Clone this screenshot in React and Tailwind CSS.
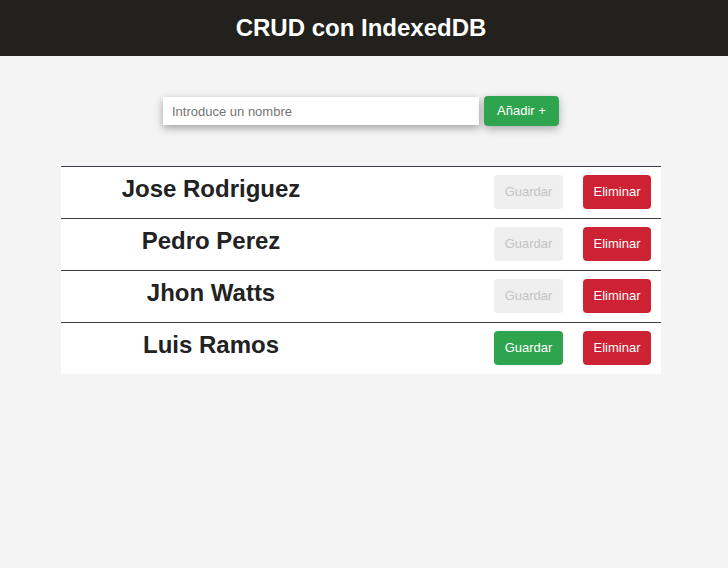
import React from "react";

const people = [
  { name: "Jose Rodriguez", dirty: false },
  { name: "Pedro Perez", dirty: false },
  { name: "Jhon Watts", dirty: false },
  { name: "Luis Ramos", dirty: true },
];

export default function App() {
  return (
    <div className="min-h-[568px] bg-[#f4f4f4] font-['Liberation_Sans',Arial,sans-serif]">
      <header className="flex h-[56px] items-center justify-center bg-[#22211d] pr-[6px]">
        <h1 className="text-[24px] font-bold text-white">CRUD con IndexedDB</h1>
      </header>

      <div className="w-[722px]">
        <div className="mt-[40px] flex items-center justify-center gap-[5px]">
          <input
            className="h-[28px] w-[316px] bg-white px-[9px] text-[13px] text-[#333] shadow-[0_3px_8px_rgba(0,0,0,0.35)] outline-none placeholder:text-[#757575]"
            placeholder="Introduce un nombre"
          />
          <button className="h-[30px] w-[75px] rounded-[4px] bg-[#2ea44f] text-[13px] text-white shadow-[0_3px_8px_rgba(0,0,0,0.3)]">
            Añadir +
          </button>
        </div>

        <div className="mx-auto mt-[40px] w-[600px] bg-white">
          {people.map((p) => (
            <div
              key={p.name}
              className="flex h-[52px] items-start border-t border-[#3a3f47]"
            >
              <div className="w-[300px] pt-[8px] text-center text-[24px] font-bold leading-[28px] text-[#222]">
                {p.name}
              </div>
              <div className="ml-auto flex gap-[20px] pr-[10px] pt-[8px]">
                <button
                  className={`h-[34px] w-[69px] rounded-[4px] text-[13px] ${
                    p.dirty ? "bg-[#2ea44f] text-white" : "bg-[#efefef] text-[#c4c4c4]"
                  }`}
                >
                  Guardar
                </button>
                <button className="h-[34px] w-[68px] rounded-[4px] bg-[#cc2233] text-[13px] text-white">
                  Eliminar
                </button>
              </div>
            </div>
          ))}
        </div>
      </div>
    </div>
  );
}
